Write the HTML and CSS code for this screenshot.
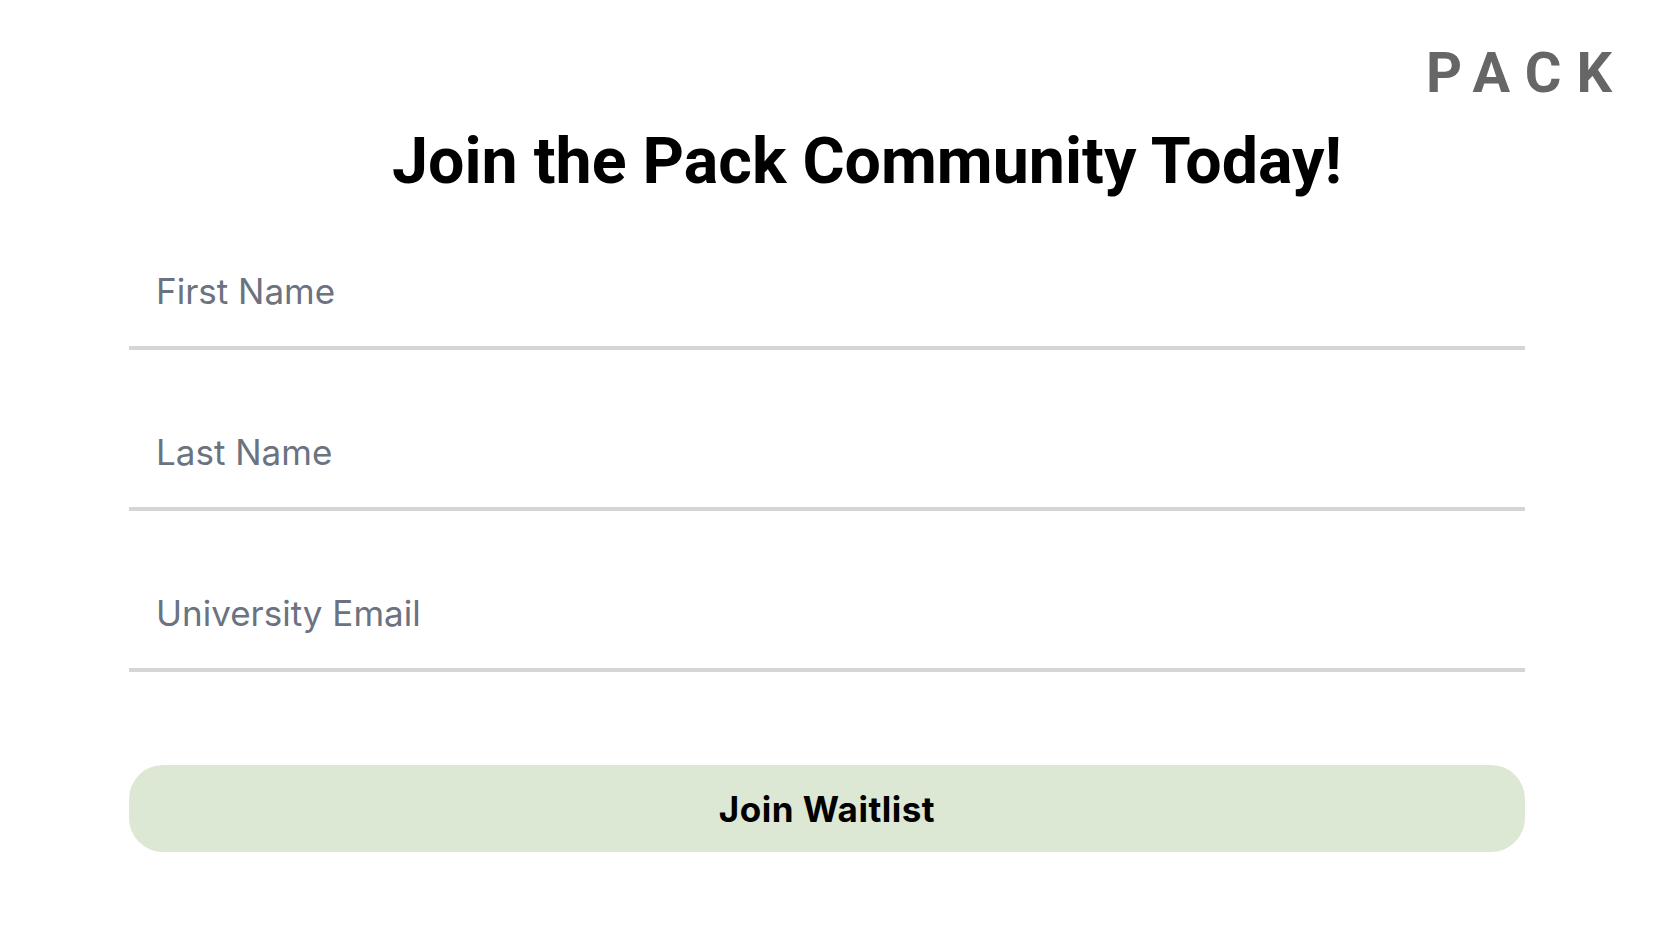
FILE: index.html
```html
<!DOCTYPE html>
<html lang="en">
<head>
<meta charset="utf-8">
<title>Join the Pack</title>
<link rel="stylesheet" href="styles.css">
</head>
<body>
<header class="topbar">
  <div class="logo">PACK</div>
</header>
<main class="signup">
  <h1 class="title">Join the Pack Community Today!</h1>
  <form class="form">
    <input class="field" type="text" placeholder="First Name">
    <input class="field" type="text" placeholder="Last Name">
    <input class="field" type="email" placeholder="University Email">
    <button class="submit" type="button">Join Waitlist</button>
  </form>
</main>
</body>
</html>
```
FILE: styles.css
```css
html, body {
  margin: 0;
  padding: 0;
  background: #ffffff;
}

body {
  width: 1666px;
  height: 938px;
  overflow: hidden;
  font-family: Inter, "Noto Sans", sans-serif;
}

.topbar {
  display: flex;
  justify-content: flex-end;
  padding: 45px 39px 0 0;
}

.logo {
  font-family: Roboto, "Liberation Sans", sans-serif;
  font-weight: 700;
  font-size: 56px;
  line-height: 56px;
  letter-spacing: 15px;
  color: #666666;
}

.signup {
  width: 1396px;
  margin-left: 129px;
  display: flex;
  flex-direction: column;
}

.title {
  margin: 28px 0 0 0;
  padding-left: 80px;
  font-family: Roboto, "Liberation Sans", sans-serif;
  font-weight: 700;
  font-size: 64.5px;
  line-height: 64px;
  color: #000000;
  text-align: center;
}

.form {
  display: flex;
  flex-direction: column;
  gap: 47px;
  margin-top: 43px;
}

.field {
  box-sizing: border-box;
  width: 100%;
  height: 114px;
  padding: 0 27px;
  margin: 0;
  border: none;
  border-bottom: 4px solid #d5d5d5;
  outline: none;
  background: transparent;
  font-family: Inter, "Noto Sans", sans-serif;
  font-size: 35px;
  color: #111111;
}

.field::placeholder {
  color: #6b7280;
  opacity: 1;
}

.submit {
  box-sizing: border-box;
  margin-top: 46px;
  width: 100%;
  height: 87px;
  border: none;
  border-radius: 34px;
  background: #dde8d4;
  font-family: Inter, "Noto Sans", sans-serif;
  font-weight: 700;
  font-size: 35px;
  letter-spacing: 0.5px;
  color: #000000;
  cursor: pointer;
}
```
